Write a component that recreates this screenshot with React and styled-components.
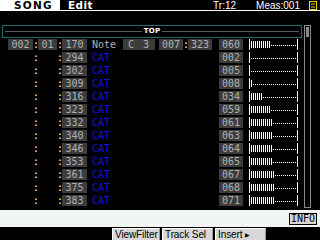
import styled, { createGlobalStyle } from "styled-components";

const GlobalStyle = createGlobalStyle`
  html, body {
    margin: 0;
    padding: 0;
    background: #000;
  }
  #root {
    width: 320px;
    height: 240px;
    overflow: hidden;
  }
`;

const ROWS = [
  { pos: ["002", "01", "170"], type: "Note", note: true, gate: ["007", "323"], vel: 60 },
  { tick: "294", type: "CAT", vel: 2 },
  { tick: "302", type: "CAT", vel: 5 },
  { tick: "309", type: "CAT", vel: 8 },
  { tick: "316", type: "CAT", vel: 34 },
  { tick: "323", type: "CAT", vel: 59 },
  { tick: "332", type: "CAT", vel: 61 },
  { tick: "340", type: "CAT", vel: 63 },
  { tick: "346", type: "CAT", vel: 64 },
  { tick: "353", type: "CAT", vel: 65 },
  { tick: "361", type: "CAT", vel: 67 },
  { tick: "375", type: "CAT", vel: 68 },
  { tick: "383", type: "CAT", vel: 71 },
];

const pad3 = (n) => String(n).padStart(3, "0");

function App() {
  return (
    <Screen>
      <GlobalStyle />
      <Header>
        <ModeTab>SONG</ModeTab>
        <PageTitle>Edit</PageTitle>
        <Status>Tr:12</Status>
        <Status>Meas:001</Status>
        <MenuIcon width="8" height="9" viewBox="0 0 8 9">
          <rect x="0.5" y="0.5" width="7" height="8" fill="none" stroke="#e8d400" />
          <line x1="2" y1="3" x2="6" y2="3" stroke="#e8d400" />
          <line x1="2" y1="6" x2="6" y2="6" stroke="#e8d400" />
        </MenuIcon>
      </Header>

      <Main>
        <ListArea>
          <TopBar>
            <TopLine />
            <TopLabel>TOP</TopLabel>
            <TopLine />
          </TopBar>
          {ROWS.map((r, i) => {
            const count = Math.floor(r.vel / 5.5);
            return (
              <Row key={i}>
                {r.pos ? <Box>{r.pos[0]}</Box> : <span />}
                <Colon>:</Colon>
                {r.pos ? <Box>{r.pos[1]}</Box> : <span />}
                <Colon>:</Colon>
                <Box>{r.pos ? r.pos[2] : r.tick}</Box>
                <TypeText $cat={r.type === "CAT"}>{r.type}</TypeText>
                {r.note ? (
                  <NoteBox>
                    <span>C</span>
                    <span>3</span>
                  </NoteBox>
                ) : (
                  <span />
                )}
                <span />
                {r.gate ? <Box>{r.gate[0]}</Box> : <span />}
                {r.gate ? <Colon>:</Colon> : <span />}
                {r.gate ? <Box>{r.gate[1]}</Box> : <span />}
                <span />
                <Box>{pad3(r.vel)}</Box>
                <span />
                <Bar>
                  <Stripes style={{ width: count * 2 }} />
                  <Dots />
                </Bar>
              </Row>
            );
          })}
        </ListArea>
        <ScrollTrack>
          <ScrollThumb />
        </ScrollTrack>
      </Main>

      <InfoStrip>
        <InfoButton>INFO</InfoButton>
      </InfoStrip>

      <ButtonBar>
        <SoftButton $w={48}>ViewFilter</SoftButton>
        <SoftButton $w={51}>Track Sel</SoftButton>
        <SoftButton $w={51}>
          Insert <Arrow>▶</Arrow>
        </SoftButton>
      </ButtonBar>
    </Screen>
  );
}

const Screen = styled.div`
  width: 320px;
  height: 240px;
  background: #000;
  display: flex;
  flex-direction: column;
  font-family: "DejaVu Sans Mono", monospace;
  color: #fff;
`;

const Header = styled.div`
  height: 10px;
  border-bottom: 1px solid #fff;
  display: flex;
  align-items: stretch;
`;

const ModeTab = styled.div`
  width: 60px;
  background: #fff;
  color: #000;
  font-family: "DejaVu Sans", sans-serif;
  font-weight: bold;
  font-size: 10.5px;
  letter-spacing: 1.2px;
  line-height: 11px;
  padding-left: 14px;
  box-sizing: border-box;
`;

const PageTitle = styled.div`
  margin-left: 8px;
  font-family: "DejaVu Sans", sans-serif;
  font-weight: bold;
  font-size: 10.5px;
  letter-spacing: 0.4px;
  line-height: 11px;
  flex: 1;
`;

const Status = styled.div`
  font-family: "Liberation Sans", sans-serif;
  font-size: 10px;
  line-height: 11px;
  margin-right: 20px;
  &:last-of-type {
    margin-right: 9px;
  }
`;

const MenuIcon = styled.svg`
  margin: 1px 3px 0 0;
`;

const Main = styled.div`
  height: 199px;
  display: grid;
  grid-template-columns: 304px 8px;
`;

const ListArea = styled.div`
  display: flex;
  flex-direction: column;
`;

const TopBar = styled.div`
  margin: 14px 0 1px 2px;
  width: 300px;
  height: 13px;
  box-sizing: border-box;
  border: 1px solid #1f6b6b;
  display: flex;
  align-items: center;
  padding: 0 2px;
`;

const TopLine = styled.div`
  flex: 1;
  height: 1px;
  background: #5a5a5a;
`;

const TopLabel = styled.div`
  font-family: "DejaVu Sans", sans-serif;
  font-weight: bold;
  font-size: 7px;
  line-height: 7px;
  padding: 0 2px;
  letter-spacing: 0.3px;
`;

const Row = styled.div`
  height: 11px;
  margin-top: 2px;
  &:nth-child(2) {
    margin-top: 0;
  }
  padding-left: 8px;
  display: grid;
  grid-template-columns: 25px 5px 19px 5px 25px 36px 32px 4px 24px 5px 24px 7px 24px 6px 49px;
  align-items: stretch;
`;

const Box = styled.div`
  background: #3c3c3c;
  color: #b0b0b0;
  font-size: 10px;
  line-height: 11px;
  text-align: center;
`;

const NoteBox = styled(Box)`
  display: flex;
  justify-content: space-between;
  padding: 0 6px 0 5px;
`;

const Colon = styled.div`
  font-size: 10px;
  line-height: 11px;
  color: #fff;
  text-align: center;
`;

const TypeText = styled.div`
  font-family: "DejaVu Sans Mono", monospace;
  font-size: 10px;
  line-height: 11px;
  padding-left: 5px;
  color: ${({ $cat }) => ($cat ? "#1414d8" : "#b0b0b0")};
`;

const Bar = styled.div`
  border-left: 1px solid #fff;
  border-right: 1px solid #fff;
  display: flex;
  align-items: center;
  padding: 0 1px;
`;

const Stripes = styled.div`
  height: 7px;
  flex: none;
  background: repeating-linear-gradient(
    to right,
    #fff 0,
    #fff 1px,
    transparent 1px,
    transparent 2px
  );
`;

const Dots = styled.div`
  flex: 1;
  height: 1px;
  margin-top: 1px;
  background: repeating-linear-gradient(
    to right,
    #fff 0,
    #fff 1px,
    transparent 1px,
    transparent 2px
  );
`;

const ScrollTrack = styled.div`
  margin-top: 14px;
  width: 7px;
  height: 183px;
  box-sizing: border-box;
  border: 1px solid #8a8a8a;
  padding: 1px;
`;

const ScrollThumb = styled.div`
  height: 10px;
  background: #8a8a8a;
`;

const InfoStrip = styled.div`
  height: 17px;
  background: #f2f6f2;
  display: flex;
  justify-content: flex-end;
  align-items: center;
  padding-right: 3px;
`;

const InfoButton = styled.div`
  width: 28px;
  height: 12px;
  box-sizing: border-box;
  border: 1px solid #000;
  background: #d6d6d6;
  color: #000;
  font-family: "DejaVu Sans Mono", monospace;
  font-size: 10px;
  line-height: 10px;
  text-align: center;
`;

const ButtonBar = styled.div`
  height: 12px;
  margin-top: 1px;
  display: flex;
  justify-content: flex-end;
  gap: 2px;
  padding-right: 54px;
`;

const SoftButton = styled.div`
  width: ${({ $w }) => $w}px;
  height: 12px;
  box-sizing: border-box;
  background: #d8d8d8;
  border-top: 1px solid #fff;
  border-left: 1px solid #fff;
  border-right: 1px solid #999;
  color: #000;
  font-family: "Liberation Sans", sans-serif;
  font-size: 10px;
  letter-spacing: -0.1px;
  line-height: 11px;
  padding: 0 1px 0 2px;
  text-align: left;
  white-space: nowrap;
`;

const Arrow = styled.span`
  font-size: 6px;
  vertical-align: 1px;
`;

export default App;
